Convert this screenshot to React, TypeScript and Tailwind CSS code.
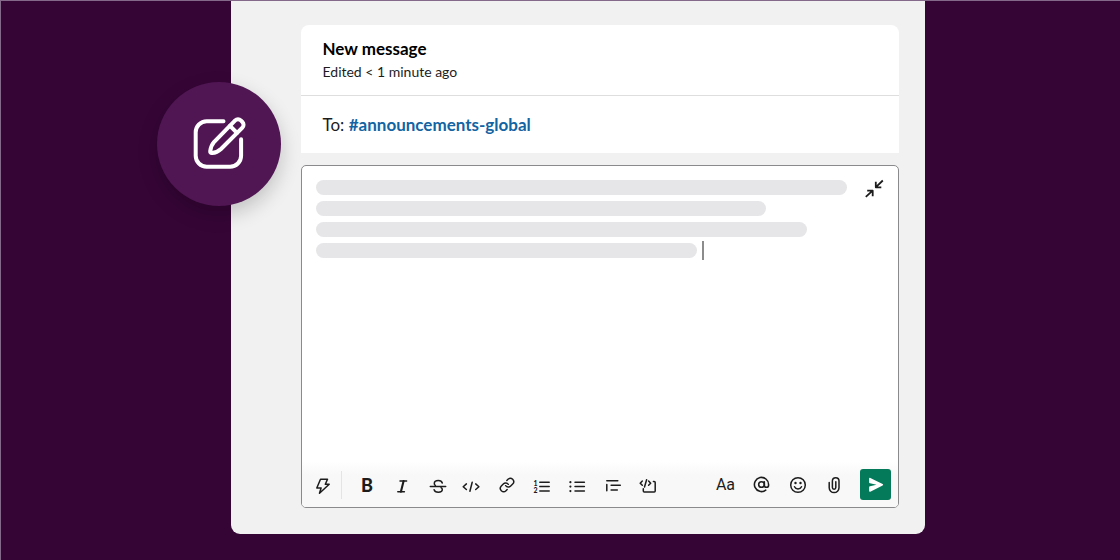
import type { ReactNode } from "react";
import { AtSign, Link } from "lucide-react";

function Glyph({ children }: { children: ReactNode }) {
  return (
    <svg
      viewBox="0 0 24 24"
      className="size-6"
      fill="none"
      stroke="currentColor"
      strokeWidth={1.5}
      strokeLinecap="round"
      strokeLinejoin="round"
      aria-hidden="true"
    >
      {children}
    </svg>
  );
}

function Tool({ label, wide, children }: { label: string; wide?: boolean; children: ReactNode }) {
  return (
    <button
      type="button"
      aria-label={label}
      className={`flex h-[31px] items-center justify-center ${wide ? "w-9" : "w-[35px]"}`}
    >
      {children}
    </button>
  );
}

function FormatTools() {
  return (
    <div className="flex items-center">
      <Tool label="Shortcuts">
        <Glyph>
          <path d="M9.5 6.3h7l-2.2 4.9h3.9L8.5 20.3l1.6-5.3H5.8z" />
        </Glyph>
      </Tool>
      <span className="mr-2 h-7 w-px bg-[#e4e4e4]" />
      <Tool label="Bold">
        <span className="text-lg leading-6 font-black">B</span>
      </Tool>
      <Tool label="Italic">
        <Glyph>
          <path d="M10 8h6.600M7.800 18.800h6.600" />
          <path d="M13.600 8 10.900 18.800" strokeWidth={2.1} />
        </Glyph>
      </Tool>
      <Tool label="Strikethrough">
        <Glyph>
          <path d="M5.300 13.500h15.400" />
          <path d="M17.300 10c-.5-1.600-2-2.400-4-2.400-2.300 0-4 1.100-4 2.900 0 .9.400 1.500 1.100 2M16 14.700c.9.500 1.300 1.100 1.300 1.900 0 1.700-1.700 2.700-4 2.700-2.200 0-3.800-.9-4.200-2.600" />
        </Glyph>
      </Tool>
      <Tool label="Code">
        <Glyph>
          <path d="M6.4 10.9 3.2 13.7l3.200 2.800M15.700 10.900l3.200 2.800-3.200 2.800M12.200 9.300 9.900 18.300" />
        </Glyph>
      </Tool>
      <Tool label="Link">
        <Link className="size-4" strokeWidth={2.2} />
      </Tool>
      <Tool label="Ordered list">
        <Glyph>
          <path d="M9.800 9.200h9.400M9.800 13.600h9.400M9.800 18.100h9.400" />
          <text x="3.600" y="12.600" fontSize="7" fontWeight="900" fill="currentColor" stroke="none">1</text>
          <text x="3.600" y="20" fontSize="7" fontWeight="900" fill="currentColor" stroke="none">2</text>
        </Glyph>
      </Tool>
      <Tool label="Bulleted list">
        <Glyph>
          <path d="M10 9.200h9.400M10 13.600h9.400M10 18.100h9.400" />
          <path d="M5.400 9.200h.01M5.400 13.600h.01M5.400 18.100h.01" strokeWidth={2.2} />
        </Glyph>
      </Tool>
      <Tool label="Blockquote">
        <Glyph>
          <path d="M6.800 7.800h11M6.800 11.500v6.200M11.100 12.300h9.200M11.100 17h6.200" />
        </Glyph>
      </Tool>
      <Tool label="Code block">
        <Glyph>
          <path d="M7.300 8 5.200 10.200l2.100 2.100M13.600 8l2.100 2.200-2.100 2.100M11.600 6.700 9.500 14" />
          <path d="M8.300 15.800v2.300a1 1 0 0 0 1 1h9.900a1 1 0 0 0 1-1V9.400a1 1 0 0 0-1-1h-.8" />
        </Glyph>
      </Tool>
    </div>
  );
}

function MessageTools() {
  return (
    <div className="flex items-center">
      <Tool label="Toggle formatting" wide>
        <span className="font-['Roboto',sans-serif] text-base leading-6">Aa</span>
      </Tool>
      <Tool label="Mention someone" wide>
        <AtSign className="size-[17px]" strokeWidth={2.2} />
      </Tool>
      <Tool label="Emoji" wide>
        <Glyph>
          <circle cx="12" cy="12" r="7.3" />
          <path d="M9.500 10h.01M14.500 10h.01" strokeWidth={2.4} />
          <path d="M8.500 13.700c.7 1.500 2 2.200 3.500 2.200s2.800-.7 3.500-2.200" />
        </Glyph>
      </Tool>
      <Tool label="Attach a file" wide>
        <Glyph>
          <path d="M7.200 9.500v5.200a4.900 4.900 0 0 0 9.800 0V8a3.300 3.300 0 0 0-6.600 0v6.500a1.700 1.700 0 0 0 3.400 0V8.800" />
        </Glyph>
      </Tool>
      <button
        type="button"
        aria-label="Send"
        className="ml-2 flex size-[31px] items-center justify-center rounded-[3px] bg-[#057a5a] text-white"
      >
        <svg viewBox="0 0 24 24" className="size-6" fill="currentColor" aria-hidden="true">
          <path d="M6.100 5.600c0-.7.600-1 1.200-.7l12.300 6.200c.7.400.7 1 0 1.400L7.300 18.700c-.6.300-1.200 0-1.200-.7v-3.600c0-.6.300-1 .9-1.100l6.500-1.500L7 10.300c-.6-.1-.9-.5-.9-1.100z" />
        </svg>
      </button>
    </div>
  );
}

function ComposeBadge() {
  return (
    <div className="absolute top-[81px] left-[-74px] flex size-[124px] items-center justify-center rounded-full bg-[#501553] text-white shadow-[0_8px_20px_rgba(0,0,0,0.2)]">
      <svg
        viewBox="0 0 56 56"
        className="size-14"
        fill="none"
        stroke="currentColor"
        strokeWidth={4}
        strokeLinecap="round"
        strokeLinejoin="round"
        aria-hidden="true"
      >
        <path d="M32.500 5.300H15.700a11 11 0 0 0-11 11v23.400a11 11 0 0 0 11 11h23.400a11 11 0 0 0 11-11V23.300" />
        <path d="M44.200 4.400a4 4 0 0 1 5.600 0l1.600 1.600a4 4 0 0 1 0 5.600L30 33c-2.800 2.600-5.800 3.800-9 4.100-1.200.1-1.900-.7-1.800-1.900.4-3.300 1.600-6.600 4-9.400z" />
        <path d="M39 9.800l7 7" />
      </svg>
    </div>
  );
}

export default function App() {
  return (
    <main className="flex min-h-screen items-start justify-center border-t border-l border-[#84698a] bg-[#350536] font-['Lato',sans-serif] text-[#1d1c1d]">
      <div className="relative ml-[34px] w-full max-w-[694px] rounded-b-[9px] bg-[#f1f1f1] pt-6 pr-[26px] pb-[26px] pl-[70px]">
        <ComposeBadge />
        <header className="rounded-t-lg bg-white">
          <div className="border-b border-[#dedede] px-[22px] pt-3 pb-3">
            <h1 className="text-[17px] leading-6 font-bold text-black">New message</h1>
            <p className="text-sm leading-[22px]">Edited &lt; 1 minute ago</p>
          </div>
          <p className="px-[22px] py-4 text-[17px] leading-[25px]">
            To: <a href="#announcements-global" className="font-bold text-[#1264a3]">#announcements-global</a>
          </p>
        </header>
        <section
          aria-label="Message editor"
          className="mt-3 flex min-h-[343px] flex-col justify-between rounded-[5px] border border-[#8a8a8c] bg-white"
        >
          <div className="flex items-start justify-between pt-3.5 pr-3 pl-3.5">
            <div className="flex min-w-0 flex-col gap-1.5">
              <div className="h-[15px] w-[531px] max-w-full rounded-full bg-[#e6e6e8]" />
              <div className="h-[15px] w-[450px] max-w-full rounded-full bg-[#e6e6e8]" />
              <div className="h-[15px] w-[491px] max-w-full rounded-full bg-[#e6e6e8]" />
              <div className="flex h-[15px] items-center gap-[5px]">
                <div className="h-[15px] w-[381px] max-w-full rounded-full bg-[#e6e6e8]" />
                <span className="h-[19px] w-0.5 shrink-0 bg-[#8c8c8c]" />
              </div>
            </div>
            <button type="button" aria-label="Collapse editor" className="-mt-1 shrink-0">
              <svg
                viewBox="0 0 24 24"
                className="size-6"
                fill="none"
                stroke="currentColor"
                strokeWidth={1.8}
                strokeLinejoin="round"
                aria-hidden="true"
              >
                <path d="M3.800 20.900l6.800-6.200M5.200 14.700h5.500v5.500M20.800 4.500l-6.900 6.700M13.800 5.800v5.500h5.500" />
              </svg>
            </button>
          </div>
          <div className="flex items-center justify-between rounded-b-[4px] bg-linear-to-b from-white to-[#f8f8f8] to-30% pt-2 pr-[7px] pb-[7px] pl-1">
            <FormatTools />
            <MessageTools />
          </div>
        </section>
      </div>
    </main>
  );
}
